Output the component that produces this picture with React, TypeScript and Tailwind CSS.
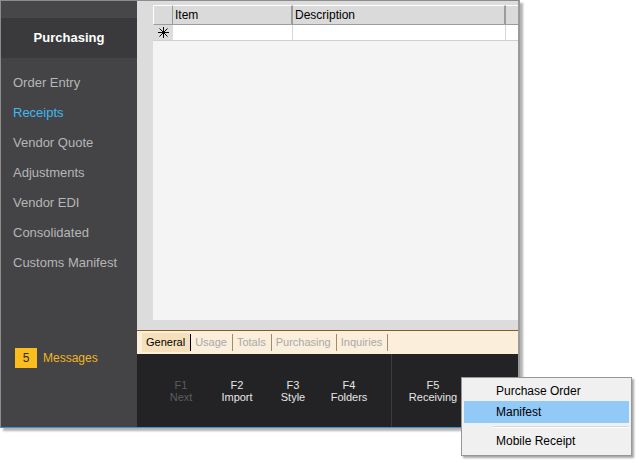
import React from "react";

const navItems = [
  "Order Entry",
  "Receipts",
  "Vendor Quote",
  "Adjustments",
  "Vendor EDI",
  "Consolidated",
  "Customs Manifest",
];

const tabs = ["General", "Usage", "Totals", "Purchasing", "Inquiries"];

const fkeys = [
  { key: "F1", label: "Next", disabled: true },
  { key: "F2", label: "Import" },
  { key: "F3", label: "Style" },
  { key: "F4", label: "Folders" },
];

export default function App() {
  return (
    <div
      className="relative w-[639px] h-[463px] bg-white"
      style={{ fontFamily: '"Liberation Sans", Arial, sans-serif' }}
    >
      <div className="flex w-[520px] h-[428px] border-t border-l border-[#8c8c8c] border-r-2 border-r-[#9a9a9a] border-b border-b-[#3f8fd2] shadow-[3px_3px_2px_rgba(0,0,0,0.3)]">
        {/* sidebar */}
        <div className="w-[136px] bg-[#444446] flex flex-col">
          <div className="h-[17px] bg-[#474749]" />
          <div className="h-[40px] bg-[#3a3a3c] flex items-center justify-center text-[13px] font-bold text-white">
            Purchasing
          </div>
          <div className="pt-[10px] flex flex-col">
            {navItems.map((n) => (
              <div
                key={n}
                className={`h-[30px] flex items-center pl-[12px] text-[13px] ${
                  n === "Receipts" ? "text-[#3fb9f1]" : "text-[#b6b6b6]"
                }`}
              >
                {n}
              </div>
            ))}
          </div>
          <div className="mt-auto mb-[59px] flex items-center pl-[14px]">
            <div className="w-[22px] h-[20px] bg-[#fbbd1d] flex items-center justify-center text-[12px] text-[#2a2a2a]">
              5
            </div>
            <span className="ml-[6px] text-[12px] text-[#f2b51f]">Messages</span>
          </div>
        </div>

        {/* main */}
        <div className="flex-1 flex flex-col bg-[#dcdcdc]">
          <div className="flex-1 pt-[4px] pl-[16px] pb-[10px] flex flex-col">
            <div className="flex-1 bg-[#f4f4f4] flex flex-col text-[12px] text-black">
              <div className="flex h-[20px] bg-[#dadada]">
                <div className="w-[20px] border-t border-l border-white border-r border-r-[#9c9c9c] border-b border-b-[#9c9c9c]" />
                <div className="w-[120px] border-t border-white border-r-2 border-r-[#9c9c9c] border-b border-b-[#9c9c9c] pl-[2px] leading-[18px]">
                  Item
                </div>
                <div className="w-[213px] border-t border-white border-r-2 border-r-[#9c9c9c] border-b border-b-[#9c9c9c] pl-[2px] leading-[18px]">
                  Description
                </div>
                <div className="flex-1 border-t border-white border-b border-b-[#9c9c9c]" />
              </div>
              <div className="flex h-[16px] border-b border-[#d0d0d0]">
                <div className="w-[20px] bg-[#dcdcdc] flex items-center justify-center">
                  <svg width="11" height="11" viewBox="0 0 11 11" stroke="#000" strokeWidth="1" shapeRendering="crispEdges">
                    <line x1="5.5" y1="0" x2="5.5" y2="11" />
                    <line x1="0" y1="5.5" x2="11" y2="5.5" />
                    <line x1="1.5" y1="1.5" x2="9.5" y2="9.5" shapeRendering="auto" />
                    <line x1="9.5" y1="1.5" x2="1.5" y2="9.5" shapeRendering="auto" />
                  </svg>
                </div>
                <div className="w-[120px] bg-white border-r border-[#d6d6d6]" />
                <div className="w-[213px] bg-white border-r border-[#d6d6d6]" />
                <div className="flex-1 bg-white" />
              </div>
            </div>
          </div>

          {/* tabs */}
          <div className="h-[24px] border-t border-[#8a5a1c] bg-[#fbeedb] flex items-center pl-[5px] text-[11px]">
            {tabs.map((t, i) => (
              <div key={t} className="flex items-center h-[19px]">
                <div
                  className={`h-full flex items-center pl-[4px] pr-[5px] ${
                    i === 0 ? "bg-[#f6dfbb] text-black" : "text-[#a9a9a9]"
                  }`}
                >
                  {t}
                </div>
                <div
                  className={`w-[1px] h-[17px] ${
                    i === 0 ? "bg-black" : "bg-[#a08a70]"
                  }`}
                />
              </div>
            ))}
          </div>

          {/* function keys */}
          <div className="h-[73px] bg-[#232325] flex pl-[16px] text-[11px] leading-[12px]">
            {fkeys.map((f) => (
              <div
                key={f.key}
                className={`w-[56px] flex flex-col items-center justify-center ${
                  f.disabled ? "text-[#5c5c5c]" : "text-[#e6e6e6]"
                }`}
              >
                <span>{f.key}</span>
                <span>{f.label}</span>
              </div>
            ))}
            <div className="w-[14px]" />
            <div className="w-[1px] bg-[#3c3c3e]" />
            <div className="w-[13px]" />
            <div className="w-[56px] flex flex-col items-center justify-center text-[#e6e6e6]">
              <span>F5</span>
              <span>Receiving</span>
            </div>
          </div>
        </div>
      </div>

      {/* context menu */}
      <div className="absolute left-[461px] top-[377px] w-[171px] h-[79px] bg-[#f0f0f0] border border-[#979797] shadow-[2px_2px_2px_rgba(0,0,0,0.35)] p-[2px] text-[12px] text-black flex flex-col">
        <div className="h-[21px] flex items-center pl-[32px]">Purchase Order</div>
        <div className="h-[22px] flex items-center pl-[32px] bg-[#91c9f7]">Manifest</div>
        <div className="h-[7px] flex items-center pl-[29px]">
          <div className="w-full h-[2px] border-t border-[#d7d7d7] border-b border-b-white" />
        </div>
        <div className="h-[21px] flex items-center pl-[32px]">Mobile Receipt</div>
      </div>
    </div>
  );
}
